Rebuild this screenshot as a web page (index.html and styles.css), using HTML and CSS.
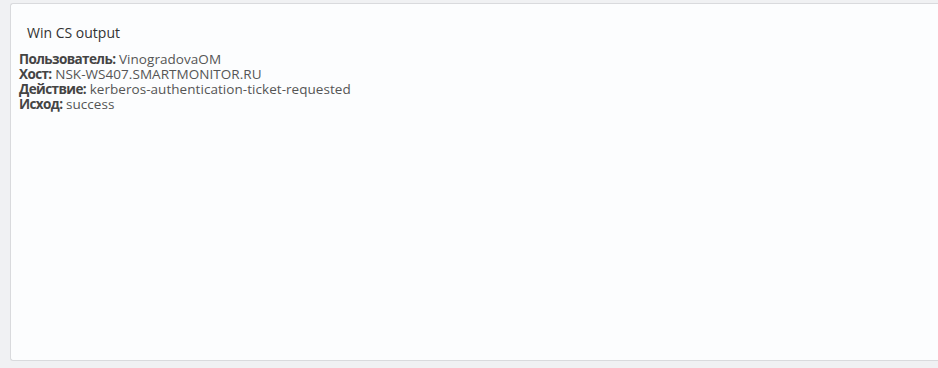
FILE: index.html
```html
<!DOCTYPE html>
<html>
<head>
<meta charset="utf-8">
<link rel="stylesheet" href="styles.css">
</head>
<body>
<div class="card">
  <div class="title">Win CS output</div>
  <div class="rows">
    <div class="row"><b>Пользователь:</b> VinogradovaOM</div>
    <div class="row"><b>Хост:</b> NSK-WS407.SMARTMONITOR.RU</div>
    <div class="row"><b>Действие:</b> kerberos-authentication-ticket-requested</div>
    <div class="row"><b>Исход:</b> success</div>
  </div>
</div>
</body>
</html>
```
FILE: styles.css
```css
html, body {
  margin: 0;
  padding: 0;
  background: #f0f1f3;
  height: 368px;
  overflow: hidden;
}
body {
  padding: 3px 0 0 10px;
  box-sizing: border-box;
  font-family: "Open Sans", "Noto Sans", sans-serif;
}
.card {
  height: 358px;
  box-sizing: border-box;
  background: #fcfdfe;
  border: 1px solid #d9dadd;
  border-right: none;
  border-radius: 3px 0 0 3px;
  padding: 20px 0 0 8px;
}
.title {
  font-size: 14px;
  color: #333;
  padding-left: 8px;
  line-height: 18px;
}
.rows {
  margin-top: 10px;
  font-size: 13.5px;
  line-height: 15px;
  color: #555;
  letter-spacing: 0.05px;
}
.row b {
  color: #444;
  font-weight: 700;
  letter-spacing: -0.6px;
}
```
